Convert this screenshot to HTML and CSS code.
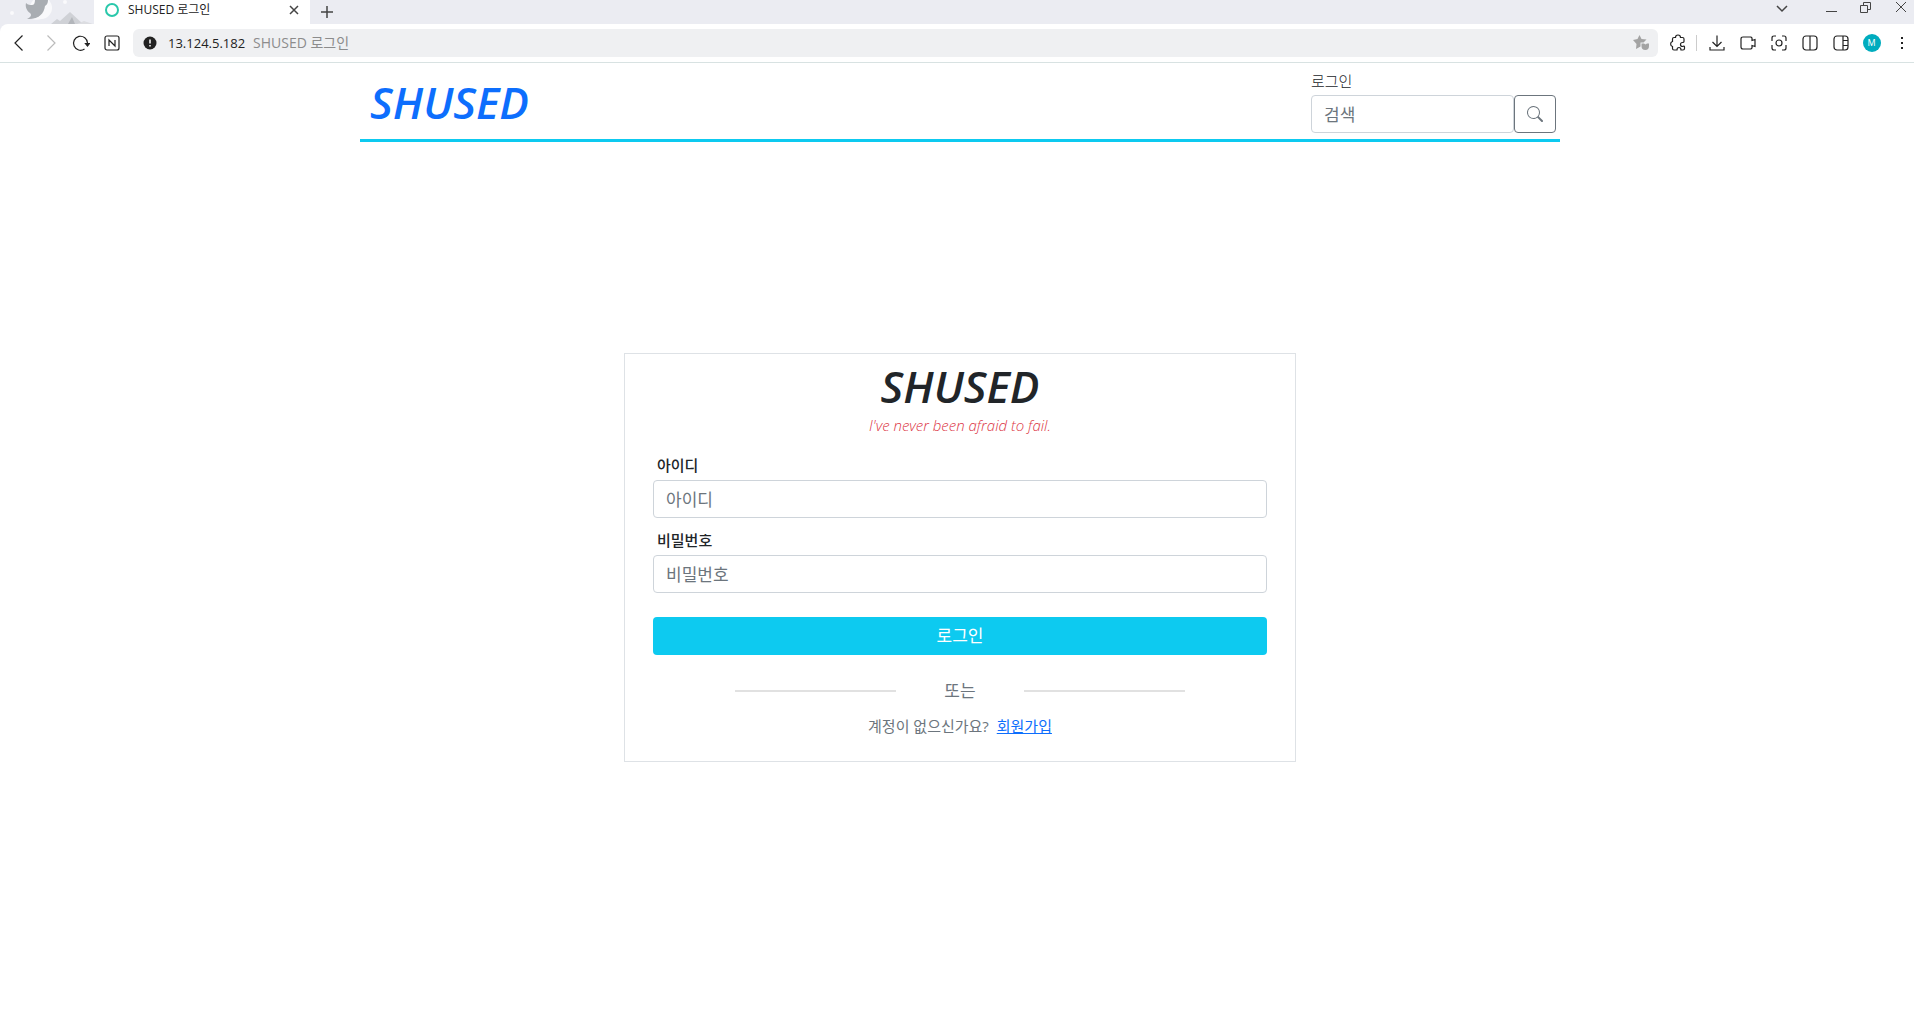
FILE: index.html
```html
<!DOCTYPE html>
<html lang="ko">
<head>
<meta charset="utf-8">
<meta name="viewport" content="width=device-width, initial-scale=1">
<title>SHUSED 로그인</title>
<link rel="stylesheet" href="styles.css">
</head>
<body>
<div class="browser">
  <div class="tabstrip">
    <svg class="theme" width="94" height="24" viewBox="0 0 94 24" aria-hidden="true">
      <circle cx="41" cy="8" r="11" fill="#f9f9fb"/>
      <path d="M26 3c2 2 4 2 6 2c2 0 3-2 3-5h13c0 3-1 5-3 6c-1 8-7 14-18 13c4-2 5-4 3-6c-3-2-5-6-4-10z" fill="#a9adb2"/>
      <path d="M49 0c0 3-2 5-3 6c-1 8-7 13-15 13c10 3 20-3 20-12z" fill="#f9f9fb"/>
      <circle cx="12" cy="13" r="2" fill="#fafafc"/><circle cx="65" cy="2" r="2" fill="#fafafc"/>
      <path d="M51 24l6-5 3 2 10-9 13 12z" fill="#cfd1d6"/>
      <path d="M68 24l4-7 3 7z" fill="#b3b6bb"/>
      <path d="M77 24l7-3 9 3z" fill="#dcdde1"/>
    </svg>
    <div class="tab">
      <svg width="16" height="16" viewBox="0 0 16 16" fill="none" stroke="#2ac8ab" stroke-width="2"><circle cx="8" cy="8" r="6"/></svg>
      <span class="tab-title">SHUSED 로그인</span>
      <button class="icon" aria-label="탭 닫기"><svg width="16" height="16" viewBox="0 0 16 16"><path d="M4 4l8 8M12 4l-8 8"/></svg></button>
    </div>
    <button class="icon new-tab" aria-label="새 탭"><svg width="16" height="16" viewBox="0 0 16 16"><path d="M8 2v12M2 8h12"/></svg></button>
    <div class="window-controls">
      <button class="icon tab-list" aria-label="탭 목록"><svg width="18" height="18" viewBox="0 0 18 18"><path d="M4 7l5 5 5-5"/></svg></button>
      <button class="icon" aria-label="최소화"><svg width="18" height="18" viewBox="0 0 18 18"><path d="M4 12.500h11" stroke-width="1"/></svg></button>
      <button class="icon" aria-label="복원"><svg width="18" height="18" viewBox="0 0 18 18"><path d="M3.500 6.500h7v7h-7zM6.500 6.500v-3h7v7h-3" stroke-width="1"/></svg></button>
      <button class="icon" aria-label="닫기"><svg width="18" height="18" viewBox="0 0 18 18"><path d="M4 3l10 10M14 3L4 13" stroke-width="1"/></svg></button>
    </div>
  </div>
  <div class="toolbar">
    <button class="tool" aria-label="뒤로"><svg viewBox="0 0 18 18"><path d="M12.500 1.500L5 9l7.500 7.500"/></svg></button>
    <button class="tool disabled" aria-label="앞으로"><svg viewBox="0 0 18 18"><path d="M6.500 1.500L14 9l-7.500 7.500"/></svg></button>
    <button class="tool" aria-label="새로고침"><svg viewBox="0 0 18 18"><path d="M12.500 15A7 7 0 1 1 15.500 9"/><path d="M13.500 9.500h4l-2 2.500z" fill="#222"/></svg></button>
    <button class="tool" aria-label="네이버"><svg viewBox="0 0 18 18"><rect x="2" y="2" width="14" height="14" rx="2"/><path d="M6 12V6l6 6V6"/></svg></button>
    <div class="address">
      <svg width="14" height="14" viewBox="0 0 14 14" aria-hidden="true"><circle cx="7" cy="7" r="6.500" fill="#222"/><path d="M7 3.500v4M7 9v1.500" stroke="#fff" stroke-width="1.500"/></svg>
      <input class="url" aria-label="주소" value="13.124.5.182">
      <span class="url-title">SHUSED 로그인</span>
      <svg width="18" height="18" viewBox="0 0 18 18" aria-hidden="true"><path d="M7.500 1l2 4 5 .5-3 3H8.500v4L4 15l.5-5L1 6l4.500-1z" fill="#a3a3a3"/><path d="M9.500 9.500h2.500l1.500 1 1.500-1h2v2.500a3.750 4 0 0 1-7.500 0z" fill="#a3a3a3"/></svg>
    </div>
    <button class="tool" aria-label="확장 앱"><svg viewBox="0 0 18 18"><path d="M6.500 3.500A2.500 2.500 0 0 1 11.500 3.500H13.500Q15 3.500 15 5V7.500Q15 8.500 13.500 8.500A2 2 0 0 0 13.500 12.500Q15.500 11.500 15.500 13V14.500Q15.500 16 14 16H12Q12 13.500 10 13.500T8 16H5Q3.500 16 3.500 14.500V12.500A2.600 2.600 0 0 1 3.500 7.500V5Q3.500 3.500 5 3.500z"/></svg></button>
    <span class="separator"></span>
    <button class="tool" aria-label="다운로드"><svg viewBox="0 0 18 18"><path d="M9 1.500v11M4.500 8L9 12.500 13.500 8M2 13v3h14v-3"/></svg></button>
    <button class="tool" aria-label="녹화"><svg viewBox="0 0 18 18"><path d="M4 3h8l1 1v2.500l3-1v7l-3-1V14l-1 1H4q-2 0-2-2V5q0-2 2-2z"/></svg></button>
    <button class="tool" aria-label="캡처"><svg viewBox="0 0 18 18"><path d="M2 7V4q0-2 2-2h2M12 2h2q2 0 2 2v3M16 11v3q0 2-2 2h-2M6 16H4q-2 0-2-2v-3"/><circle cx="9" cy="9" r="3"/></svg></button>
    <button class="tool" aria-label="화면 분할"><svg viewBox="0 0 18 18"><rect x="2" y="2" width="14" height="14" rx="3"/><path d="M9 2v14"/></svg></button>
    <button class="tool" aria-label="사이드바"><svg viewBox="0 0 18 18"><rect x="2" y="2" width="14" height="14" rx="3"/><path d="M11 2v14M11 6.500h5M11 11.500h5"/></svg></button>
    <button class="tool" aria-label="프로필"><span class="avatar">M</span></button>
    <button class="tool more" aria-label="메뉴"><svg viewBox="0 0 18 18"><path d="M9 3v2M9 8v2M9 13v2" stroke-width="2"/></svg></button>
  </div>
</div>

<div class="page">
  <header class="site-header">
    <a class="brand" href="#">SHUSED</a>
    <div class="header-side">
      <a class="login-link" href="#">로그인</a>
      <form class="search">
        <input class="field" type="search" placeholder="검색" aria-label="검색">
        <button class="search-button" type="button" aria-label="검색"><svg width="16" height="16" viewBox="0 0 16 16" fill="#6c757d"><path d="M11.742 10.344a6.500 6.500 0 1 0-1.397 1.398h-.001c.03.04.062.078.098.115l3.850 3.850a1 1 0 0 0 1.415-1.414l-3.850-3.850a1.007 1.007 0 0 0-.115-.1zM12 6.500a5.500 5.500 0 1 1-11 0 5.500 5.500 0 0 1 11 0z"/></svg></button>
      </form>
    </div>
  </header>

  <main class="content">
    <form class="card">
      <h1 class="card-title">SHUSED</h1>
      <p class="tagline">I've never been afraid to fail.</p>
      <label class="label" for="user-id">아이디</label>
      <input class="field" id="user-id" type="text" placeholder="아이디">
      <label class="label" for="password">비밀번호</label>
      <input class="field" id="password" type="password" placeholder="비밀번호">
      <button class="submit" type="button">로그인</button>
      <div class="divider"><span>또는</span></div>
      <p class="join">계정이 없으신가요? <a class="join-link" href="#">회원가입</a></p>
    </form>
  </main>
</div>
</body>
</html>
```

FILE: styles.css
```css
* {
  box-sizing: border-box;
}

body {
  margin: 0;
  background: #fff;
  color: #212529;
  font: 17px/24px "Open Sans", "Noto Sans CJK KR", sans-serif;
}

button,
input {
  font: inherit;
}

/* Browser frame */
.browser {
  background: #ebecf2;
  border-bottom: 1px solid #d8e2e2;
}

.tabstrip {
  display: flex;
  height: 24px;
  overflow: hidden;
}

.tab {
  display: flex;
  align-items: center;
  width: 216px;
  padding: 0 8px 4px 10px;
  background: #fff;
}

.tab-title {
  flex: 1;
  padding-left: 8px;
  font-size: 12px;
  line-height: 20px;
  color: #222;
}

.icon,
.tool {
  display: flex;
  align-items: center;
  justify-content: center;
  padding: 0;
  border: 0;
  background: none;
}

.icon svg {
  fill: none;
  stroke: #444;
  stroke-width: 1.5;
}

.new-tab {
  width: 34px;
}

.window-controls {
  display: flex;
  gap: 17px;
  height: 16px;
  margin-left: auto;
  padding-right: 4px;
}

.tab-list {
  margin-right: 14px;
}

.toolbar {
  display: flex;
  align-items: center;
  height: 38px;
  padding-left: 3px;
  background: #fff;
  border-radius: 8px 0 0 0;
}

.tool {
  width: 31px;
}

.tool svg {
  width: 18px;
  height: 18px;
  fill: none;
  stroke: #222;
  stroke-width: 1.2;
}

.tool.disabled svg {
  stroke: #bbb;
}

.address {
  display: flex;
  flex: 1;
  align-items: center;
  height: 28px;
  margin: 0 4px 0 6px;
  padding: 0 8px 0 10px;
  border-radius: 6px;
  background: #eff0f2;
  font-size: 14px;
}

.url {
  width: 96px;
  padding: 0 0 0 11px;
  border: 0;
  background: none;
  color: #222;
  font-size: 13px;
}

.url-title {
  flex: 1;
  color: #8c8c8c;
}

.separator {
  width: 1px;
  height: 16px;
  margin: 0 4px 0 3px;
  background: #ccc;
}

.avatar {
  width: 18px;
  height: 18px;
  border-radius: 50%;
  background: #00acbe;
  color: #fff;
  font-size: 9px;
  line-height: 18px;
}

.tool.more {
  width: 24px;
  margin-left: 3px;
}

/* Site */
.page {
  padding-left: 6px;
}

.site-header {
  display: flex;
  align-items: center;
  justify-content: space-between;
  max-width: 1200px;
  margin: 0 auto;
  padding: 8px 4px 6px 10px;
  border-bottom: 3px solid #0dcaf0;
}

.brand,
.card-title {
  font-size: 44px;
  font-style: italic;
  font-weight: 600;
  line-height: 48px;
}

.brand {
  color: #0d6efd;
  text-decoration: none;
}

.header-side {
  display: flex;
  flex-direction: column;
  gap: 4px;
}

.login-link {
  color: #212529;
  font-size: 15px;
  font-weight: 300;
  line-height: 20px;
  text-decoration: none;
}

.search {
  display: flex;
}

.field {
  width: 100%;
  height: 38px;
  padding: 6px 12px;
  border: 1px solid #ced4da;
  border-radius: 4px;
  background: #fff;
  color: #212529;
}

.field::placeholder {
  color: #6c757d;
}

.search .field {
  width: 203px;
}

.search-button {
  display: flex;
  align-items: center;
  justify-content: center;
  width: 42px;
  height: 38px;
  border: 1px solid #6c757d;
  border-radius: 4px;
  background: #fff;
}

.content {
  padding: 211px 0 32px;
}

.card {
  display: flex;
  flex-direction: column;
  max-width: 672px;
  margin: 0 auto;
  padding: 8px 28px 22px;
  border: 1px solid #dee2e6;
}

.card-title {
  margin: 0;
  text-align: center;
}

.tagline {
  margin: 5px 0 20px;
  color: #dc3545;
  font-size: 15px;
  font-style: italic;
  font-weight: 300;
  line-height: 20px;
  text-align: center;
}

.label {
  padding: 0 4px 5px;
  font-size: 15px;
  font-weight: 500;
  line-height: 20px;
}

.field + .label {
  padding-top: 12px;
}

.submit {
  height: 38px;
  margin: 24px 0;
  border: 0;
  border-radius: 4px;
  background: #0dcaf0;
  color: #fff;
}

.divider {
  display: flex;
  align-items: center;
  gap: 48px;
  padding: 0 82px;
  color: #6c757d;
}

.divider::before,
.divider::after {
  flex: 1;
  height: 2px;
  background: #e1e1e1;
  content: "";
}

.join {
  margin: 11px 0 1px;
  color: #6c757d;
  font-size: 15px;
  text-align: center;
}

.join-link {
  margin-left: 4px;
  color: #0d6efd;
}
```
